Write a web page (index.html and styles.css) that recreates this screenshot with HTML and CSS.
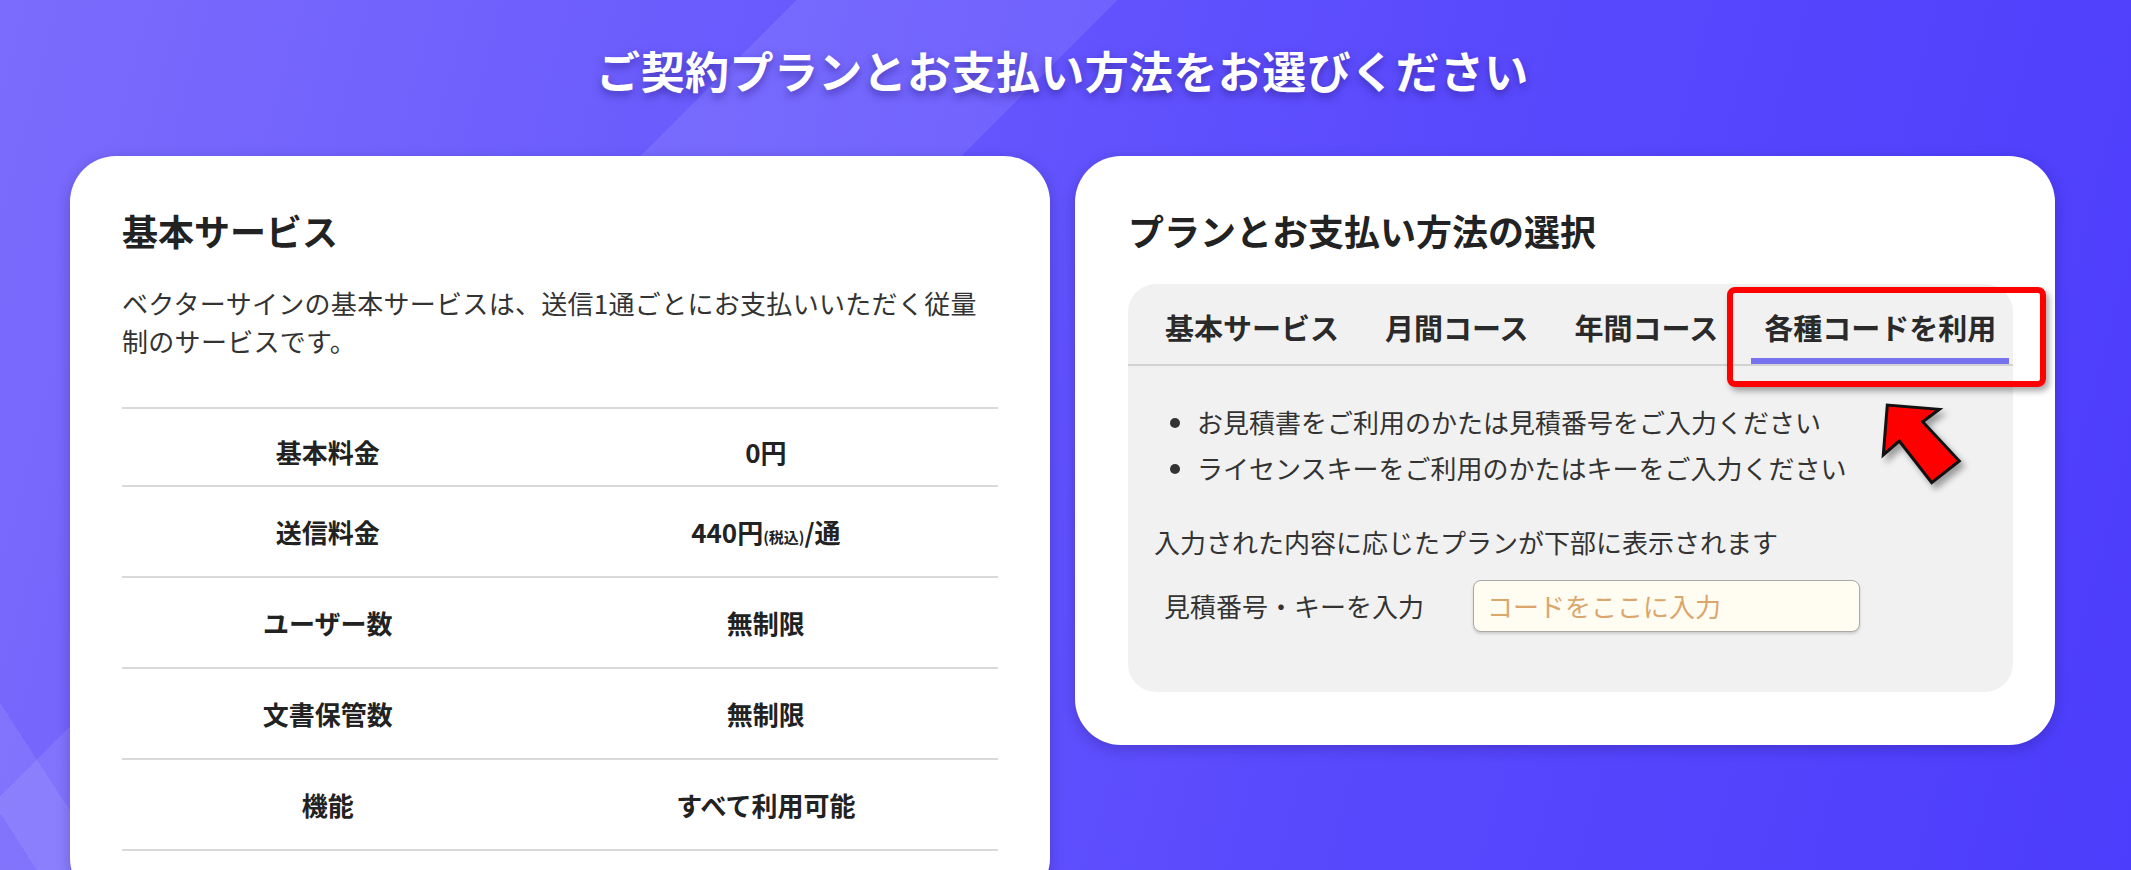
FILE: index.html
```html
<!DOCTYPE html>
<html lang="ja">
<head>
<meta charset="utf-8">
<title>ご契約プランとお支払い方法をお選びください</title>
<link rel="stylesheet" href="styles.css">
</head>
<body>
<div class="page">
  <h1 class="page-title">ご契約プランとお支払い方法をお選びください</h1>
  <div class="cards">
    <section class="card card-left">
      <h2 class="card-title">基本サービス</h2>
      <p class="card-desc">ベクターサインの基本サービスは、送信1通ごとにお支払いいただく従量制のサービスです。</p>
      <table class="price-table">
        <tr class="first-row"><td class="col-label">基本料金</td><td class="col-value">0円</td></tr>
        <tr><td class="col-label">送信料金</td><td class="col-value">440円<small class="tax">(税込)</small>/通</td></tr>
        <tr><td class="col-label">ユーザー数</td><td class="col-value">無制限</td></tr>
        <tr><td class="col-label">文書保管数</td><td class="col-value">無制限</td></tr>
        <tr><td class="col-label">機能</td><td class="col-value">すべて利用可能</td></tr>
      </table>
    </section>
    <section class="card card-right">
      <h2 class="card-title">プランとお支払い方法の選択</h2>
      <div class="panel">
        <div class="tabs">
          <div class="tab">基本サービス</div>
          <div class="tab">月間コース</div>
          <div class="tab">年間コース</div>
          <div class="tab active">各種コードを利用<span class="highlight"></span></div>
        </div>
        <div class="panel-body">
          <ul class="notes">
            <li>お見積書をご利用のかたは見積番号をご入力ください</li>
            <li>ライセンスキーをご利用のかたはキーをご入力ください</li>
          </ul>
          <p class="hint">入力された内容に応じたプランが下部に表示されます</p>
          <div class="code-row">
            <label class="code-label" for="code">見積番号・キーを入力</label>
            <input class="code-input" id="code" type="text" placeholder="コードをここに入力">
          </div>
        </div>
        <svg class="arrow" width="90" height="92" viewBox="0 0 90 92">
          <polygon points="9.3,5 5.3,55 21.3,41 53.7,82.7 81.3,61 44.7,21.7 61.3,9.3" fill="#ff0000" stroke="#111" stroke-width="3" stroke-linejoin="miter"/>
        </svg>
      </div>
    </section>
  </div>
</div>
</body>
</html>
```

FILE: styles.css
```css
html, body {
  margin: 0;
  padding: 0;
}

body {
  font-family: "Noto Sans CJK JP", "Noto Sans", sans-serif;
  color: #333;
  min-height: 100vh;
  background-color: #5d4ffd;
  background-image:
    linear-gradient(135deg, transparent 563px, rgba(255,255,255,0.09) 563px, rgba(255,255,255,0.09) 790px, transparent 790px),
    linear-gradient(57deg, transparent 31px, rgba(255,255,255,0.08) 31px, rgba(255,255,255,0.08) 91px, transparent 91px),
    linear-gradient(105deg, #7c6cfc 0%, #6a5cfd 30%, #5a4afd 62%, #4c3dfc 100%);
  background-attachment: fixed;
}

.page {
  padding: 39px 76px 40px 70px;
}

.page-title {
  margin: 0 0 55px;
  text-align: center;
  font-size: 44px;
  line-height: 62px;
  font-weight: 700;
  letter-spacing: 0.4px;
  color: #fff;
  text-shadow: 0 4px 8px rgba(40, 25, 130, 0.55);
}

.cards {
  display: grid;
  grid-template-columns: minmax(0, 1fr) minmax(0, 1fr);
  gap: 25px;
  align-items: start;
}

.card {
  background: #fff;
  border-radius: 46px;
  box-shadow: 0 4px 14px rgba(20, 10, 80, 0.25);
  padding: 49px 52px 53px;
  min-width: 0;
}

.card-right {
  padding: 49px 42px 53px 53px;
}

.card-title {
  margin: 0 0 29px;
  font-size: 36px;
  line-height: 50px;
  font-weight: 700;
  color: #222;
}

.card-desc {
  margin: 0 0 48px;
  font-size: 26px;
  line-height: 37.5px;
  letter-spacing: 0.3px;
  color: #333;
}

.price-table {
  width: 100%;
  border-collapse: collapse;
  border-top: 2px solid #d9d9d9;
}

.price-table td {
  padding: 25px 10px 25px;
  font-size: 26px;
  line-height: 39px;
  font-weight: 700;
  color: #222;
  text-align: center;
  border-bottom: 2px solid #d9d9d9;
}

.price-table .first-row td {
  padding-top: 23px;
  padding-bottom: 14px;
}

.col-label {
  width: 47%;
}

.tax {
  font-size: 15px;
  line-height: 1;
  font-weight: 700;
}

.panel {
  position: relative;
  background: #f1f1f1;
  border-radius: 28px;
}

.tabs {
  display: flex;
  gap: 20px;
  padding: 0 24px;
  border-bottom: 2px solid #d2d2d2;
  white-space: nowrap;
}

.tab {
  position: relative;
  padding: 23px 13px 11px;
  font-size: 29px;
  line-height: 40px;
  font-weight: 700;
  color: #2a2a2a;
  border-bottom: 6px solid transparent;
}

.tab.active {
  border-bottom-color: #7772ee;
}

.highlight {
  position: absolute;
  left: -24px;
  top: 3px;
  width: 319px;
  height: 100px;
  box-sizing: border-box;
  border: 6px solid #ff0000;
  border-radius: 8px;
  box-shadow: 3px 4px 6px rgba(0, 0, 0, 0.35);
}

.panel-body {
  padding: 33px 26px 60px;
}

.notes {
  margin: 0;
  padding-left: 43px;
  font-size: 26px;
  line-height: 45.6px;
  color: #333;
}

.hint {
  margin: 31.5px 0 18px;
  font-size: 26px;
  line-height: 40px;
  color: #333;
}

.code-row {
  display: flex;
  align-items: center;
  gap: 49px;
}

.code-label {
  padding-left: 10px;
  font-size: 26px;
  line-height: 40px;
  color: #333;
}

.code-input {
  width: 387px;
  height: 52px;
  box-sizing: border-box;
  padding: 0 13px;
  font-family: "Noto Sans CJK JP", "Noto Sans", sans-serif;
  font-size: 26px;
  color: #333;
  background: #fffcf2;
  border: 1.5px solid #a9a9a9;
  border-radius: 8px;
  box-shadow: 0 2px 3px rgba(0, 0, 0, 0.15);
  outline: none;
}

.code-input::placeholder {
  color: #dba66c;
}

.arrow {
  position: absolute;
  left: 750px;
  top: 116px;
  filter: drop-shadow(4px 5px 3px rgba(0, 0, 0, 0.35));
}
```
